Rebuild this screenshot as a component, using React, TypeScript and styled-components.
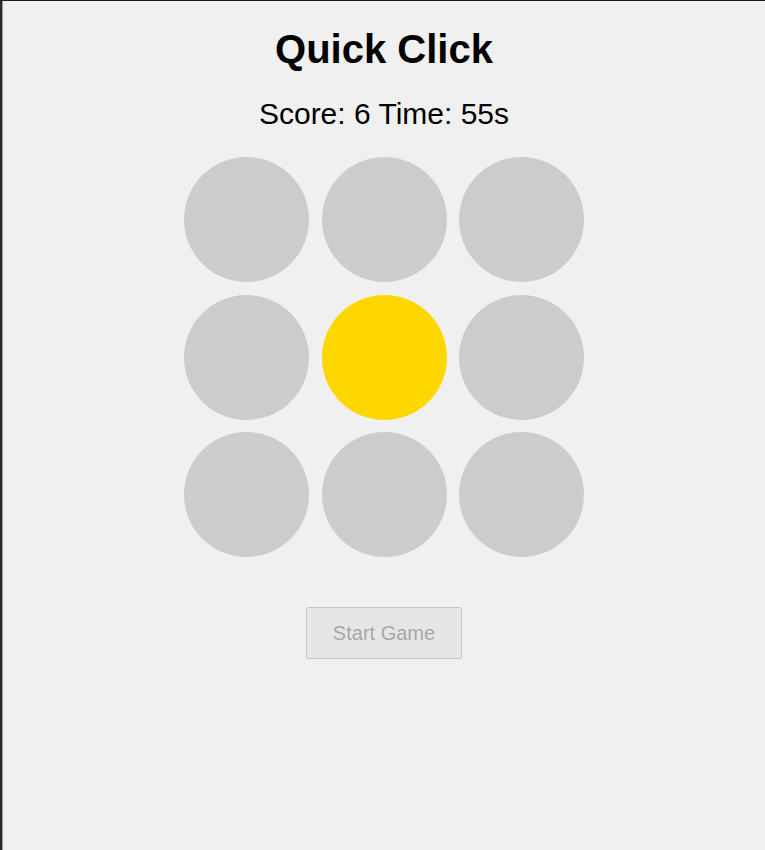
import React from "react";
import styled, { createGlobalStyle } from "styled-components";

const Global = createGlobalStyle`
  html, body { margin: 0; padding: 0; background: #f0f0f0; }
  body { font-family: "Liberation Sans", Arial, sans-serif; }
`;

const Frame = styled.div`
  box-sizing: border-box;
  min-height: 100vh;
  border-top: 1px solid #1c1c1c;
  border-left: 2px solid #2a2a2a;
  background: #f0f0f0;
`;

const Page = styled.main`
  box-sizing: border-box;
  min-height: calc(100vh - 1px);
  border-left: 1px solid #9c9c9c;
  display: flex;
  flex-direction: column;
  align-items: center;
  padding-top: 25px;
`;

const Title = styled.h1`
  margin: 0;
  font-size: 40px;
  line-height: 46px;
  font-weight: 700;
  color: #000;
`;

const Status = styled.div`
  margin-top: 25px;
  font-size: 30px;
  line-height: 34px;
  color: #000;
`;

const Board = styled.div`
  margin-top: 26px;
  display: grid;
  grid-template-columns: repeat(3, 125px);
  grid-auto-rows: 125px;
  column-gap: 12.5px;
  row-gap: 12.5px;
`;

const Hole = styled.div<{ $active: boolean }>`
  border-radius: 50%;
  background: ${(p) => (p.$active ? "#ffd700" : "#cccccc")};
`;

const StartButton = styled.button`
  margin-top: 50px;
  box-sizing: border-box;
  width: 156px;
  height: 52px;
  font-family: "Liberation Sans", Arial, sans-serif;
  font-size: 20px;
  color: #a8a8a8;
  background: #e6e6e6;
  border: 1px solid #c6c6c6;
  border-radius: 2px;
  padding: 0;
  cursor: default;
`;

export default function App() {
  const active = 4;
  return (
    <>
      <Global />
      <Frame>
        <Page>
          <Title>Quick Click</Title>
          <Status>Score: 6 Time: 55s</Status>
          <Board>
            {Array.from({ length: 9 }, (_, i) => (
              <Hole key={i} $active={i === active} />
            ))}
          </Board>
          <StartButton disabled>Start Game</StartButton>
        </Page>
      </Frame>
    </>
  );
}
